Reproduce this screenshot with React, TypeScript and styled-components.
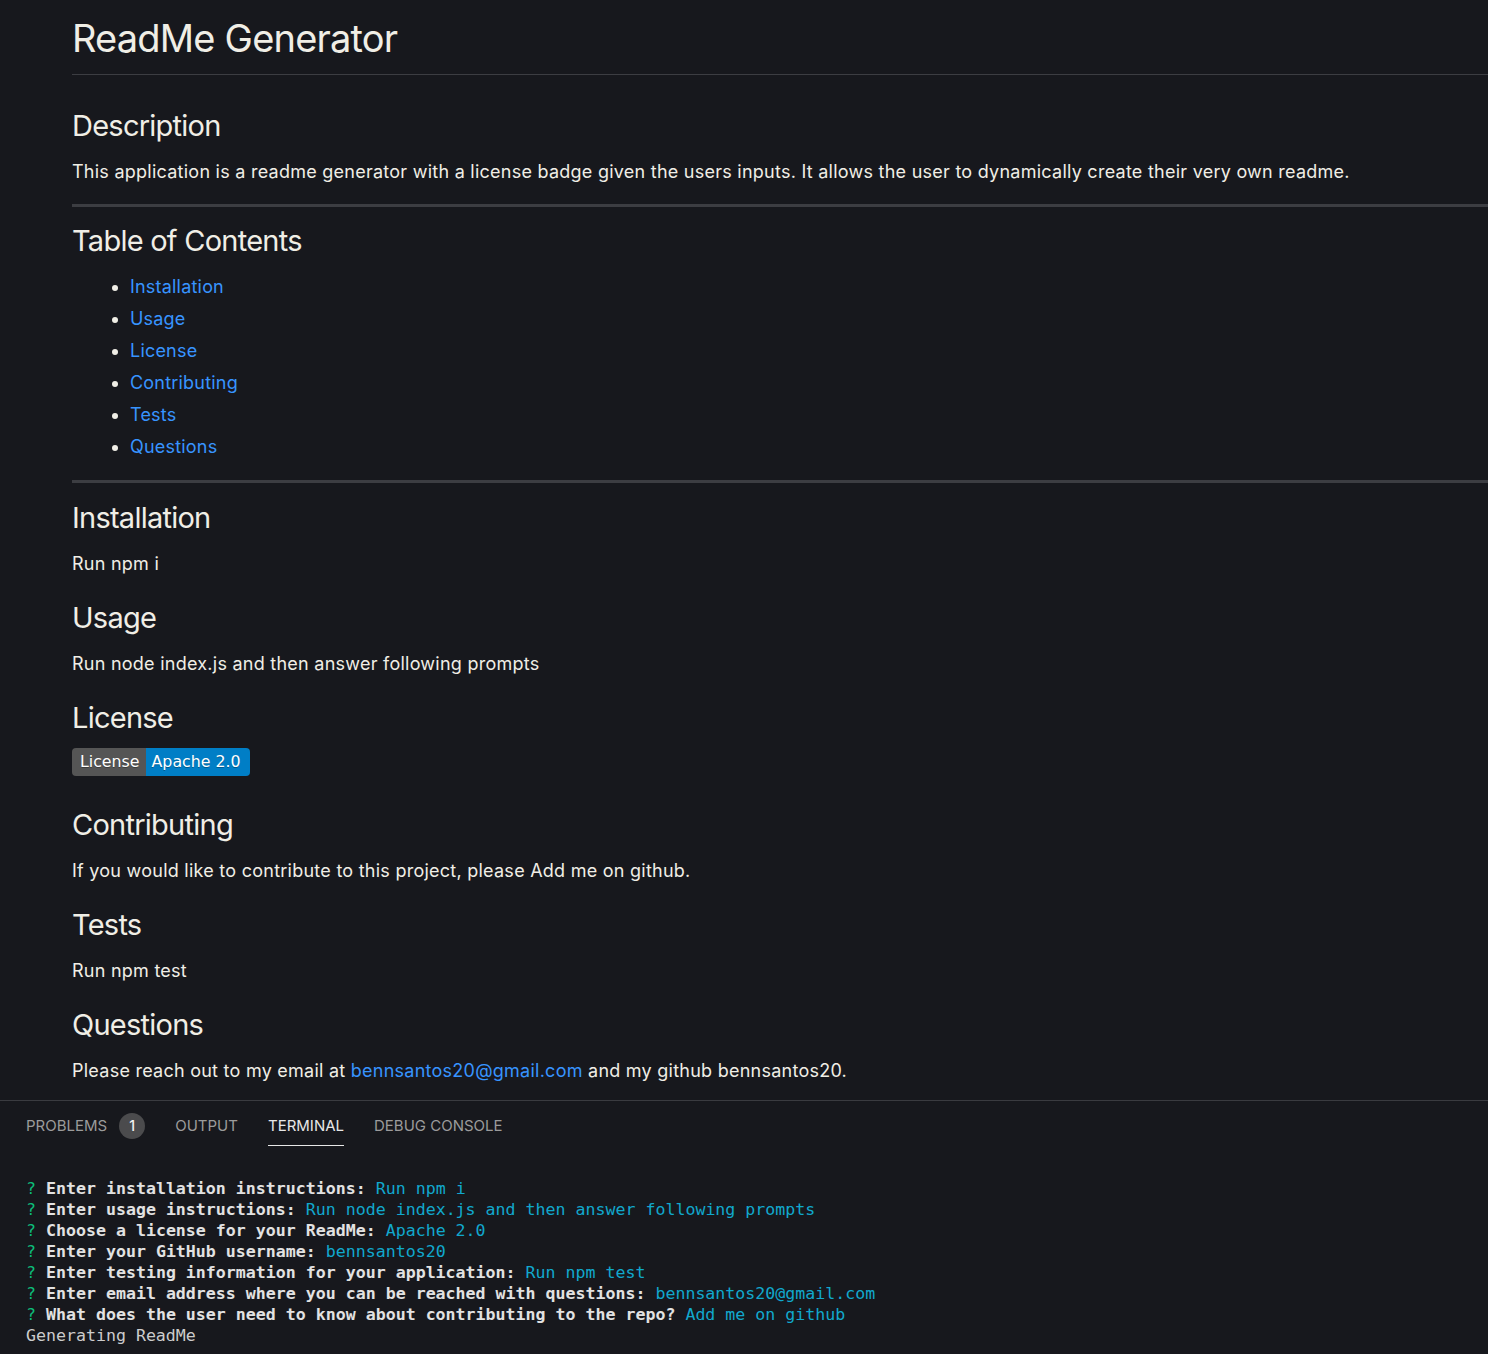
import React from "react";
import styled, { createGlobalStyle } from "styled-components";

const GlobalStyle = createGlobalStyle`
  html, body {
    margin: 0;
    padding: 0;
    background-color: #17181d;
  }
  body {
    font-family: Inter, "Noto Sans", sans-serif;
    color: #f0eee6;
  }
`;

const tocItems = [
  "Installation",
  "Usage",
  "License",
  "Contributing",
  "Tests",
  "Questions",
];

const terminalLines = [
  { prompt: "Enter installation instructions:", answer: "Run npm i" },
  {
    prompt: "Enter usage instructions:",
    answer: "Run node index.js and then answer following prompts",
  },
  { prompt: "Choose a license for your ReadMe:", answer: "Apache 2.0" },
  { prompt: "Enter your GitHub username:", answer: "bennsantos20" },
  {
    prompt: "Enter testing information for your application:",
    answer: "Run npm test",
  },
  {
    prompt: "Enter email address where you can be reached with questions:",
    answer: "bennsantos20@gmail.com",
  },
  {
    prompt: "What does the user need to know about contributing to the repo?",
    answer: "Add me on github",
  },
];

const tabs = ["PROBLEMS", "OUTPUT", "TERMINAL", "DEBUG CONSOLE"];

export default function App() {
  return (
    <>
      <GlobalStyle />
      <StyledPage>
        <StyledPreview>
          <StyledTitle>ReadMe Generator</StyledTitle>

          <StyledHeading $top={33}>Description</StyledHeading>
          <StyledText>
            This application is a readme generator with a license badge given
            the users inputs. It allows the user to dynamically create their
            very own readme.
          </StyledText>
          <StyledDivider $top={19.5} />

          <StyledHeading $top={16}>Table of Contents</StyledHeading>
          <StyledList>
            {tocItems.map((item) => (
              <li key={item}>
                <StyledLink href={`#${item.toLowerCase()}`}>{item}</StyledLink>
              </li>
            ))}
          </StyledList>
          <StyledDivider $top={17} />

          <StyledHeading $top={17} id="installation">
            Installation
          </StyledHeading>
          <StyledText>Run npm i</StyledText>

          <StyledHeading id="usage">Usage</StyledHeading>
          <StyledText>Run node index.js and then answer following prompts</StyledText>

          <StyledHeading id="license">License</StyledHeading>
          <StyledBadge>
            <StyledBadgeLabel>License</StyledBadgeLabel>
            <StyledBadgeValue>Apache 2.0</StyledBadgeValue>
          </StyledBadge>

          <StyledHeading $top={31} id="contributing">
            Contributing
          </StyledHeading>
          <StyledText>
            If you would like to contribute to this project, please Add me on
            github.
          </StyledText>

          <StyledHeading id="tests">Tests</StyledHeading>
          <StyledText>Run npm test</StyledText>

          <StyledHeading id="questions">Questions</StyledHeading>
          <StyledText>
            Please reach out to my email at{" "}
            <StyledLink href="mailto:bennsantos20@gmail.com">
              bennsantos20@gmail.com
            </StyledLink>{" "}
            and my github bennsantos20.
          </StyledText>
        </StyledPreview>

        <StyledPanel>
          <StyledTabBar>
            {tabs.map((tab) => (
              <StyledTab key={tab} $active={tab === "TERMINAL"}>
                {tab}
                {tab === "PROBLEMS" && <StyledCount>1</StyledCount>}
              </StyledTab>
            ))}
          </StyledTabBar>
          <StyledTerminal>
            {terminalLines.map((line) => (
              <StyledLine key={line.prompt}>
                <StyledMark>?</StyledMark> <b>{line.prompt}</b>{" "}
                <StyledAnswer>{line.answer}</StyledAnswer>
              </StyledLine>
            ))}
            <StyledLine>Generating ReadMe</StyledLine>
          </StyledTerminal>
        </StyledPanel>
      </StyledPage>
    </>
  );
}

const StyledPage = styled.div`
  display: flex;
  flex-direction: column;
  min-height: 100vh;
  background-color: #17181d;
`;

const StyledPreview = styled.main`
  padding: 0 0 16px 72px;
`;

const StyledTitle = styled.h1`
  margin: 14px 0 0;
  padding-bottom: 12px;
  font-size: 38px;
  line-height: 48px;
  font-weight: 400;
  letter-spacing: -0.8px;
  border-bottom: 1px solid #3c3d42;
`;

const StyledHeading = styled.h2<{ $top?: number }>`
  margin: ${(p) => p.$top ?? 23.5}px 0 0;
  font-size: 29px;
  line-height: 36px;
  font-weight: 400;
  letter-spacing: -0.75px;
`;

const StyledText = styled.p`
  margin: 13.5px 0 0;
  font-size: 18px;
  line-height: 27px;
  letter-spacing: 0.25px;
`;

const StyledDivider = styled.hr<{ $top: number }>`
  margin: ${(p) => p.$top}px 0 0;
  height: 3px;
  border: none;
  background-color: #3c3d42;
`;

const StyledList = styled.ul`
  margin: 12px 0 0;
  padding-left: 58px;
  font-size: 18px;
  line-height: 32px;
  letter-spacing: 0.2px;
`;

const StyledLink = styled.a`
  color: #3794ff;
  text-decoration: none;
`;

const StyledBadge = styled.div`
  display: inline-flex;
  margin-top: 12px;
  height: 28px;
  border-radius: 4px;
  overflow: hidden;
  font-family: "DejaVu Sans", Verdana, sans-serif;
  font-size: 15.8px;
  line-height: 28px;
  color: #fff;
  text-shadow: 0 1px 0 rgba(1, 1, 1, 0.3);
`;

const StyledBadgeLabel = styled.span`
  padding: 0 6px 0 8px;
  background-color: #555;
`;

const StyledBadgeValue = styled.span`
  padding: 0 9px 0 6px;
  background-color: #007ec6;
`;

const StyledPanel = styled.section`
  border-top: 1px solid #3a3b40;
  padding-bottom: 8px;
`;

const StyledTabBar = styled.div`
  display: flex;
  gap: 30px;
  padding: 10px 26px 0;
  height: 50px;
  box-sizing: border-box;
  align-items: flex-start;
`;

const StyledTab = styled.div<{ $active?: boolean }>`
  display: flex;
  align-items: center;
  gap: 12px;
  height: 35px;
  box-sizing: border-box;
  padding-bottom: 4px;
  font-size: 15px;
  color: ${(p) => (p.$active ? "#e7e7e7" : "#9b9b9b")};
  border-bottom: 1px solid ${(p) => (p.$active ? "#e7e7e7" : "transparent")};
`;

const StyledCount = styled.span`
  display: inline-flex;
  align-items: center;
  justify-content: center;
  width: 26px;
  height: 26px;
  border-radius: 50%;
  background-color: #4b4b4d;
  color: #f2f2f2;
  font-size: 14px;
  font-weight: 500;
`;

const StyledTerminal = styled.div`
  padding: 27px 26px 0;
  font-family: "DejaVu Sans Mono", "Liberation Mono", monospace;
  font-size: 16.6px;
  line-height: 21px;
  color: #cccccc;
  white-space: pre;
  b {
    color: #e2e2e2;
  }
`;

const StyledLine = styled.div``;

const StyledMark = styled.span`
  color: #0dbc79;
`;

const StyledAnswer = styled.span`
  color: #11a8cd;
`;
